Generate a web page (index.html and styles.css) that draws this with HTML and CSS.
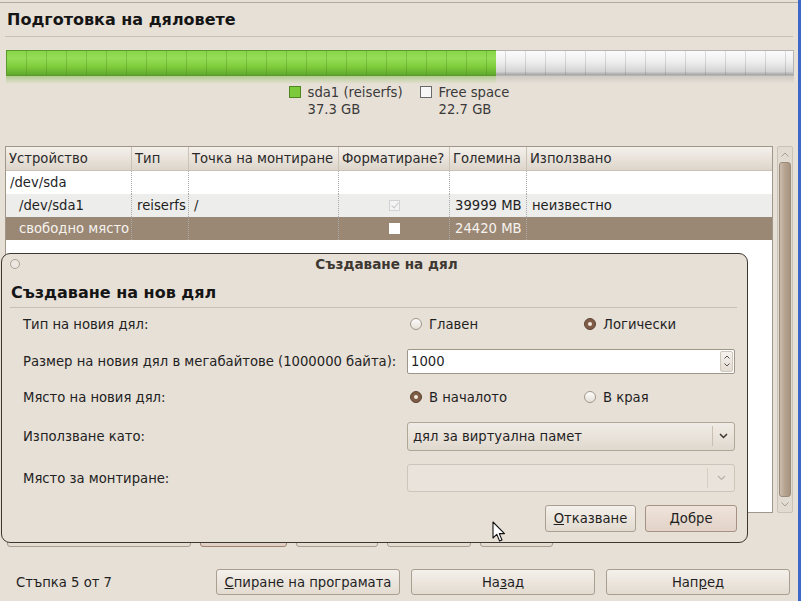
FILE: index.html
```html
<!doctype html>
<html lang="bg">
<head>
  <meta charset="utf-8" />
  <title>Подготовка на дяловете</title>
  <link rel="stylesheet" href="styles.css">
</head>
<body>
<div class="win">
  <div class="top">
    <h1>Подготовка на дяловете</h1>
  </div>

  <div class="bar">
    <div class="used" style="width:62.2%"></div>
    <div class="free"></div>
  </div>
  <div class="reflect">
    <div class="used" style="width:62.2%"></div>
    <div class="free"></div>
  </div>

  <div class="legend">
    <div class="item"><span class="sw green"></span><div>sda1 (reiserfs)<br>37.3 GB</div></div>
    <div class="item"><span class="sw white"></span><div>Free space<br>22.7 GB</div></div>
  </div>

  <div class="tableArea">
    <div class="tbl">
      <div class="row head">
        <div>Устройство</div><div>Тип</div><div>Точка на монтиране</div><div>Форматиране?</div><div>Големина</div><div>Използвано</div>
      </div>
      <div class="row">
        <div>/dev/sda</div><div></div><div></div><div></div><div></div><div></div>
      </div>
      <div class="row alt">
        <div class="sub">/dev/sda1</div><div>reiserfs</div><div>/</div><div class="chk"><span class="cb on"></span></div><div>39999 MB</div><div>неизвестно</div>
      </div>
      <div class="row sel">
        <div class="sub">свободно място</div><div></div><div></div><div class="chk"><span class="cb"></span></div><div>24420 MB</div><div></div>
      </div>
    </div>
    <div class="scroll">
      <div class="sbtn"><svg width="8" height="5" viewBox="0 0 8 5"><path d="M0.5 4.5 L4 1 L7.5 4.5" fill="none" stroke="#a79d90"/></svg></div>
      <div class="thumb"></div>
      <div class="sbtn"><svg width="8" height="5" viewBox="0 0 8 5"><path d="M0.5 0.5 L4 4 L7.5 0.5" fill="none" stroke="#a79d90"/></svg></div>
    </div>
  </div>

  <div class="partBtns">
    <button>Нова таблица</button>
    <button class="hot">Нов дял</button>
    <button>Редакция</button>
    <button>Изтриване</button>
    <button>Отмяна</button>
  </div>

  <div class="footer">
    <div class="step">Стъпка 5 от 7</div>
    <button><u>С</u>пиране на програмата</button>
    <button>На<u>з</u>ад</button>
    <button>Нап<u>р</u>ед</button>
  </div>
</div>

<div class="dialog">
  <div class="dlgTitle"><span class="dot"></span><span class="ttl">Създаване на дял</span></div>
  <h2>Създаване на нов дял</h2>
  <div class="form">
    <label>Тип на новия дял:</label>
    <div class="radios">
      <span class="radio"><i class="r"></i>Главен</span>
      <span class="radio"><i class="r on"></i>Логически</span>
    </div>

    <label>Размер на новия дял в мегабайтове (1000000 байта):</label>
    <div class="spin">
      <div class="val">1000</div>
      <div class="arrows">
        <svg width="6" height="4" viewBox="0 0 6 4"><path d="M0.5 3.5 L3 1 L5.5 3.5" fill="none" stroke="#5b544c"/></svg>
        <svg width="6" height="4" viewBox="0 0 6 4"><path d="M0.5 0.5 L3 3 L5.5 0.5" fill="none" stroke="#5b544c"/></svg>
      </div>
    </div>

    <label>Място на новия дял:</label>
    <div class="radios">
      <span class="radio"><i class="r on"></i>В началото</span>
      <span class="radio"><i class="r"></i>В края</span>
    </div>

    <label>Използване като:</label>
    <div class="combo">
      <div class="val">дял за виртуална памет</div>
      <div class="arr"><svg width="9" height="6" viewBox="0 0 9 6"><path d="M1 1 L4.5 4.5 L8 1" fill="none" stroke="#3a342e" stroke-width="1.5"/></svg></div>
    </div>

    <label>Място за монтиране:</label>
    <div class="combo off">
      <div class="val"></div>
      <div class="arr"><svg width="9" height="6" viewBox="0 0 9 6"><path d="M1 1 L4.5 4.5 L8 1" fill="none" stroke="#b9b1a6" stroke-width="1.2"/></svg></div>
    </div>
  </div>
  <div class="dlgBtns">
    <button><u>О</u>тказване</button>
    <button class="def"><u>Д</u>обре</button>
  </div>
</div>

<svg class="cursor" width="14" height="22" viewBox="0 0 14 22">
  <path d="M1 1 L1 17 L4.8 13.4 L7.6 20 L10 19 L7.3 12.6 L12.5 12.6 Z" fill="#fff" stroke="#111" stroke-width="1.1" stroke-linejoin="round"/>
</svg>
</body>
</html>
```

FILE: styles.css
```css
*{box-sizing:border-box}
html,body{margin:0}
body{
  width:801px;
  height:601px;
  overflow:hidden;
  position:relative;
  background:#e7e0d7;
  font-family:"DejaVu Sans",Verdana,sans-serif;
  font-size:13.2px;
  color:#1f1f1f;
}
.win{
  height:601px;
  padding-top:2px;
  border-right:3px solid #3c67c9;
}

/* ===== TOPO ===== */
.top{
  border-top:1px solid #b3aa9e;
}
.top h1{
  margin:0 5px;
  height:34px;
  padding:0 0 1px 2px;
  display:flex;
  align-items:center;
  font-size:16px;
  font-weight:bold;
  color:#151515;
  border-bottom:1px solid #c9c0b4;
}

/* ===== BARRA ===== */
.bar{
  margin:13px 4px 0 6px;
  height:26px;
  display:flex;
}
.bar .used{
  border:1px solid #5a9a2d;
  border-right:none;
  background:
    repeating-linear-gradient(90deg,transparent 0 19px,rgba(60,120,20,.28) 19px 20px),
    linear-gradient(#89d448,#95dd56 30%,#7fcd3d 65%,#61a82e);
}
.bar .free{
  flex:1;
  border:1px solid #b4b4b4;
  border-left:none;
  background:
    repeating-linear-gradient(90deg,transparent 0 9px,rgba(0,0,0,.12) 9px 10px,transparent 10px 20px),
    linear-gradient(#fbfbfb,#eeeeee 45%,#d4d4d4 85%,#a3a3a3);
}
.reflect{
  margin:0 4px 0 6px;
  height:8px;
  display:flex;
}
.reflect .used{background:linear-gradient(rgba(110,180,55,.45),rgba(110,180,55,0))}
.reflect .free{flex:1;background:linear-gradient(rgba(150,150,150,.3),rgba(150,150,150,0))}

.legend{
  height:33px;
  display:flex;
  justify-content:center;
  gap:17px;
  color:#3a3a3a;
  line-height:17px;
}
.legend .item{display:flex;gap:7px}
.sw{width:12px;height:12px;margin-top:2px;flex:none}
.sw.green{background:#7cc93b;border:1px solid #4e8722}
.sw.white{background:#f7f7f7;border:1px solid #6a6a6a}

/* ===== TABELA ===== */
.tableArea{
  margin-top:29px;
  height:367px;
  padding:0 5px;
  display:flex;
  gap:4px;
}
.tbl{
  flex:1;
  background:#fff;
  border:1px solid #a0968a;
}
.row{
  display:grid;
  grid-template-columns:125px 57px 150px 111px 77px 1fr;
  height:23px;
}
.row > div{
  display:flex;
  align-items:center;
  padding-left:5px;
  white-space:nowrap;
  border-left:1px dotted #a9a9a9;
}
.row > div:first-child{border-left:none;padding-left:4px}
.row > div.sub{padding-left:13px}
.row.head{
  height:24px;
  background:linear-gradient(#f4f0eb,#e9e3db 50%,#ddd5cb);
  border-bottom:1px solid #cbc2b6;
  color:#2a2a2a;
}
.row.head > div{border-left:1px solid #cbc2b6;padding-left:3px}
.row.head > div:first-child{border-left:none;padding-left:3px}
.row.alt{background:#ededeb}
.row.sel{background:#9a8875;color:#f6f2ee}
.row > div.chk{justify-content:center;padding-left:0}
.cb{
  width:11px;
  height:11px;
  border:1px solid #d2d2d2;
  background:#f4f4f4;
  position:relative;
}
.cb.on::after{
  content:"";
  position:absolute;
  left:3px;top:0;
  width:3px;height:6px;
  border:solid #c6c6c6;
  border-width:0 1px 1px 0;
  transform:rotate(40deg);
}
.row.sel .cb{background:#fff;border-color:#fff}

.scroll{
  width:16px;
  border:1px solid #cbc3b7;
  border-radius:2px;
  background:#e2dbd2;
  display:flex;
  flex-direction:column;
}
.sbtn{height:15px;display:flex;align-items:center;justify-content:center;flex:none}
.thumb{
  flex:1;
  margin:0 1px;
  border:1px solid #9c8b79;
  border-radius:3px;
  background:linear-gradient(90deg,#cbbdaf,#b7a592 45%,#a8947f);
}

/* ===== BOTOES ===== */
button{
  font:inherit;
  color:#1f1f1f;
  border:1px solid #a99e90;
  border-radius:3px;
  background:linear-gradient(#f4f0eb,#e3dbd0);
  padding:0;
  height:26px;
  white-space:nowrap;
  overflow:hidden;
}
.partBtns{
  margin-top:8px;
  padding-left:7px;
  display:flex;
  gap:9px;
}
.partBtns button:nth-child(1){width:184px}
.partBtns button:nth-child(2){width:87px}
.partBtns button:nth-child(3){width:82px}
.partBtns button:nth-child(4){width:84px}
.partBtns button:nth-child(5){width:73px}
.partBtns button.hot{border-color:#a08070;background:linear-gradient(#efe2da,#e0cfc4)}

.footer{
  margin-top:22px;
  height:26px;
  padding:0 8px 0 16px;
  display:flex;
  align-items:center;
  gap:11px;
}
.step{flex:1}
.footer button{width:184px}

/* ===== DIALOGO ===== */
.dialog{
  position:absolute;
  left:1px;
  top:253px;
  width:747px;
  height:290px;
  border:1px solid #3e372f;
  border-radius:9px;
  background:#e7e0d7;
}
.dlgTitle{
  height:19px;
  display:flex;
  align-items:center;
  padding-left:8px;
}
.dot{
  width:10px;height:10px;
  border-radius:50%;
  border:1px solid #aaa296;
  background:#ece7e1;
}
.ttl{
  flex:1;
  text-align:center;
  padding-left:6px;
  font-size:13.6px;
  font-weight:bold;
  color:#3d3731;
}
.dialog h2{
  margin:10px 10px 0 8px;
  height:25px;
  padding-left:1px;
  font-size:16px;
  line-height:20px;
  color:#151515;
  border-bottom:1px solid #c9c0b4;
}
.form{
  display:grid;
  grid-template-columns:384px 328px;
  grid-template-rows:32px 42px 30px 48px 36px;
  padding-left:21px;
  align-items:center;
}
.form label{color:#222}
.radios{display:grid;grid-template-columns:174px 1fr;padding-left:3px}
.radio{display:flex;align-items:center;gap:7px}
.r{
  width:12px;height:12px;
  border-radius:50%;
  border:1px solid #a1978b;
  background:linear-gradient(#fdfcfb,#e6e0d8);
  position:relative;
}
.r.on{
  border-color:#5d4332;
  background:#7e5c45;
}
.r.on::after{
  content:"";
  position:absolute;
  left:3px;top:3px;
  width:4px;height:4px;
  border-radius:50%;
  background:#f3e9e0;
}
.spin{
  height:25px;
  display:flex;
  border:1px solid #9f968a;
  border-radius:2px;
  background:#fff;
}
.spin .val{flex:1;display:flex;align-items:center;padding-left:3px}
.spin .arrows{
  width:13px;
  margin:1px;
  border:1px solid #cfc7bb;
  border-radius:2px;
  background:linear-gradient(#f5f2ee,#e3dcd3);
  display:flex;
  flex-direction:column;
  align-items:center;
  justify-content:space-evenly;
}
.combo{
  height:29px;
  display:flex;
  align-items:center;
  border:1px solid #b0a696;
  border-radius:3px;
  background:linear-gradient(#f0ebe5,#ebe5dd 40%,#dfd8ce);
}
.combo .val{flex:1;padding-left:5px}
.combo .arr{
  width:22px;
  height:20px;
  border-left:1px solid #c8beb1;
  display:flex;
  align-items:center;
  justify-content:center;
}
.combo.off{
  height:28px;
  border-color:#cdc5ba;
  background:#e9e3db;
}
.combo.off .arr{width:27px;border-left-color:#d6cfc5}
.dlgBtns{
  margin-top:9px;
  padding-right:10px;
  display:flex;
  justify-content:flex-end;
  gap:9px;
}
.dlgBtns button{width:91px;height:27px}
.dlgBtns button.def{width:92px;border-color:#a59283;background:linear-gradient(#efe3db,#e2d2c7)}

.cursor{position:absolute;left:492px;top:521px}
```
